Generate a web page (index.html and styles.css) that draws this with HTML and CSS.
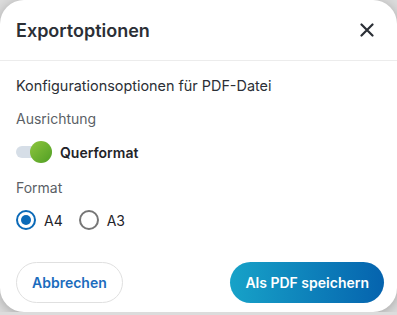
FILE: index.html
```
<!DOCTYPE html>
<html lang="de">
<head>
    <meta charset="UTF-8"/>
    <title>Exportoptionen</title>
    <link rel="stylesheet" href="styles.css">
</head>
<body>
<div class="dialog">
    <header class="dialog-head">
        <span class="title">Exportoptionen</span>
        <button class="close" aria-label="Schließen">
            <svg width="14" height="14" viewBox="0 0 14 14">
                <path d="M1.5 1.5 L12.5 12.5 M12.5 1.5 L1.5 12.5" stroke="#2b2f36" stroke-width="2.2" stroke-linecap="round"/>
            </svg>
        </button>
    </header>
    <div class="dialog-body">
        <p class="intro">Konfigurationsoptionen für PDF-Datei</p>

        <p class="label">Ausrichtung</p>
        <div class="toggle-row">
            <span class="toggle"><span class="knob"></span></span>
            <span class="toggle-text">Querformat</span>
        </div>

        <p class="label label-format">Format</p>
        <div class="radios">
            <label class="radio checked"><span class="dot"></span>A4</label>
            <label class="radio"><span class="dot"></span>A3</label>
        </div>
    </div>
    <footer class="dialog-foot">
        <button class="btn btn-ghost">Abbrechen</button>
        <button class="btn btn-primary">Als PDF speichern</button>
    </footer>
</div>
</body>
</html>
```
FILE: styles.css
```
body {
    margin: 0;
    background: #dcdcdc;
    font-family: Inter, "Liberation Sans", sans-serif;
}

.dialog {
    width: 397px;
    height: 312px;
    background: #FFF;
    border-radius: 24px;
    box-shadow: 0 2px 12px 0 rgba(0, 0, 0, 0.25);
    display: flex;
    flex-direction: column;
}

.dialog-head {
    height: 60px;
    border-bottom: 1px solid #ececec;
    display: flex;
    align-items: center;
    justify-content: space-between;
    padding: 0 23px 0 16px;
}

.title {
    font-size: 18px;
    font-weight: 600;
    color: #2b2f36;
}

.close {
    border: 0;
    background: none;
    padding: 0;
    width: 14px;
    height: 14px;
    display: flex;
}

.dialog-body {
    padding: 15px 16px 0 16px;
    flex: 1;
}

.dialog-body p {
    margin: 0;
    font-size: 14px;
    line-height: 20px;
}

.dialog-body p.intro {
    color: #2b2f36;
    font-size: 14.4px;
}

.label {
    color: #5b5f66;
    margin-top: 13px !important;
}

.label.label-format {
    margin-top: 15px !important;
}

.toggle-row {
    display: flex;
    align-items: center;
    gap: 8px;
    margin-top: 12px;
    height: 22px;
}

.toggle {
    width: 36px;
    height: 12px;
    border-radius: 6px;
    background: #d6dee7;
    position: relative;
}

.knob {
    position: absolute;
    right: 0;
    top: -5px;
    width: 22px;
    height: 22px;
    border-radius: 50%;
    background: linear-gradient(135deg, #8ec63d, #4f9e24);
}

.toggle-text {
    font-size: 14px;
    font-weight: 600;
    color: #1f2329;
}

.radios {
    display: flex;
    gap: 16px;
    margin-top: 12px;
}

.radio {
    display: flex;
    align-items: center;
    gap: 8px;
    font-size: 14px;
    color: #1f2329;
}

.dot {
    width: 16px;
    height: 16px;
    border: 2px solid #767676;
    border-radius: 50%;
    box-sizing: content-box;
    position: relative;
}

.radio.checked .dot {
    border-color: #0b6ab8;
}

.radio.checked .dot::after {
    content: "";
    position: absolute;
    top: 3px;
    left: 3px;
    width: 10px;
    height: 10px;
    border-radius: 50%;
    background: #0b6ab8;
}

.dialog-foot {
    display: flex;
    justify-content: space-between;
    align-items: center;
    padding: 0 13px 9px 16px;
}

.btn {
    height: 41px;
    border-radius: 21px;
    font-family: Inter, "Liberation Sans", sans-serif;
    font-size: 14px;
    font-weight: 600;
    padding: 0 15px;
}

.btn-ghost {
    background: #FFF;
    border: 1px solid #e0e0e0;
    color: #1b6cbd;
}

.btn-primary {
    border: 0;
    color: #FFF;
    background: linear-gradient(90deg, #17a2c8, #0563ae);
}
```
